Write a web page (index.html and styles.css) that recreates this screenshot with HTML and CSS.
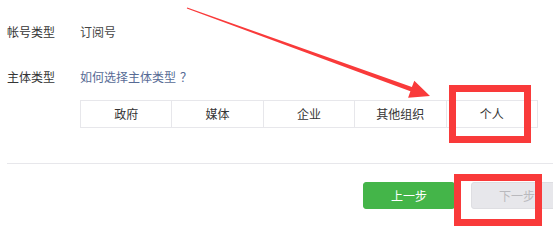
FILE: index.html
```html
<!DOCTYPE html>
<html lang="zh-CN">
<head>
    <meta charset="UTF-8">
    <title>选择主体类型</title>
    <link rel="stylesheet" href="styles.css">
</head>
<body>

    <div class="page">
        <div class="form">
            <div class="row">
                <div class="label">帐号类型</div>
                <div class="value">订阅号</div>
            </div>

            <div class="row row-type">
                <div class="label">主体类型</div>
                <div class="value">
                    <a href="#" class="link">如何选择主体类型<span class="q">？</span></a>
                    <table class="types">
                        <tr>
                            <td>政府</td>
                            <td>媒体</td>
                            <td>企业</td>
                            <td>其他组织</td>
                            <td>个人</td>
                        </tr>
                    </table>
                </div>
            </div>

            <div class="divider"></div>

            <div class="actions">
                <button class="btn btn-green">上一步</button>
                <button class="btn btn-disabled">下一步</button>
            </div>
        </div>

        <!-- annotations drawn over the screenshot -->
        <svg class="arrow" width="553" height="238" viewBox="0 0 553 238">
            <polygon fill="#f93a3a" points="186.8,8.6 187.2,7.4 411.9,87.1 414.3,80.7 430,96 408.1,97.7 410.4,91.3"/>
        </svg>
        <div class="mark mark-type"></div>
        <div class="mark mark-next"></div>
    </div>

</body>
</html>
```

FILE: styles.css
```css
body {
    margin: 0;
    font-family: "Noto Sans CJK SC", "Noto Sans", sans-serif;
    font-size: 12px;
    color: #353535;
    background-color: white;
    overflow: hidden;
}

.page {
    position: relative;
    width: 553px;
    height: 238px;
}

.form {
    padding: 22px 0 0 7px;
}

.row {
    display: flex;
    line-height: 20px;
}

.row-type {
    margin-top: 25px;
}

.label {
    width: 73px;
    flex-shrink: 0;
}

.value {
    color: #444;
}

.link {
    color: #576b95;
    text-decoration: none;
}

.link .q {
    margin-left: 4px;
}

.types {
    border-collapse: collapse;
    margin-top: 13px;
    width: 458px;
    table-layout: fixed;
}

.types td {
    border: 1px solid #e7e7eb;
    height: 26px;
    padding: 0;
    text-align: center;
    color: #353535;
}

.divider {
    height: 1px;
    background-color: #e7e7eb;
    margin-top: 35px;
}

.actions {
    display: flex;
    justify-content: flex-end;
    gap: 16px;
    margin-top: 18px;
    margin-right: -10px;
}

.btn {
    width: 92px;
    height: 27px;
    font-family: inherit;
    font-size: 12px;
    border-radius: 3px;
    border: 1px solid transparent;
    padding: 0;
}

.btn-green {
    background-color: #44b549;
    border-color: #44b549;
    color: white;
}

.btn-disabled {
    background-color: #e7e7eb;
    border-color: #dedee2;
    color: #b9b9bd;
}

.arrow {
    position: absolute;
    left: 0;
    top: 0;
}

.mark {
    position: absolute;
    border: 7px solid #f93a3a;
    box-sizing: border-box;
}

.mark-type {
    left: 449px;
    top: 85px;
    width: 82px;
    height: 58px;
}

.mark-next {
    left: 454px;
    top: 174px;
    width: 88px;
    height: 52px;
}
```
